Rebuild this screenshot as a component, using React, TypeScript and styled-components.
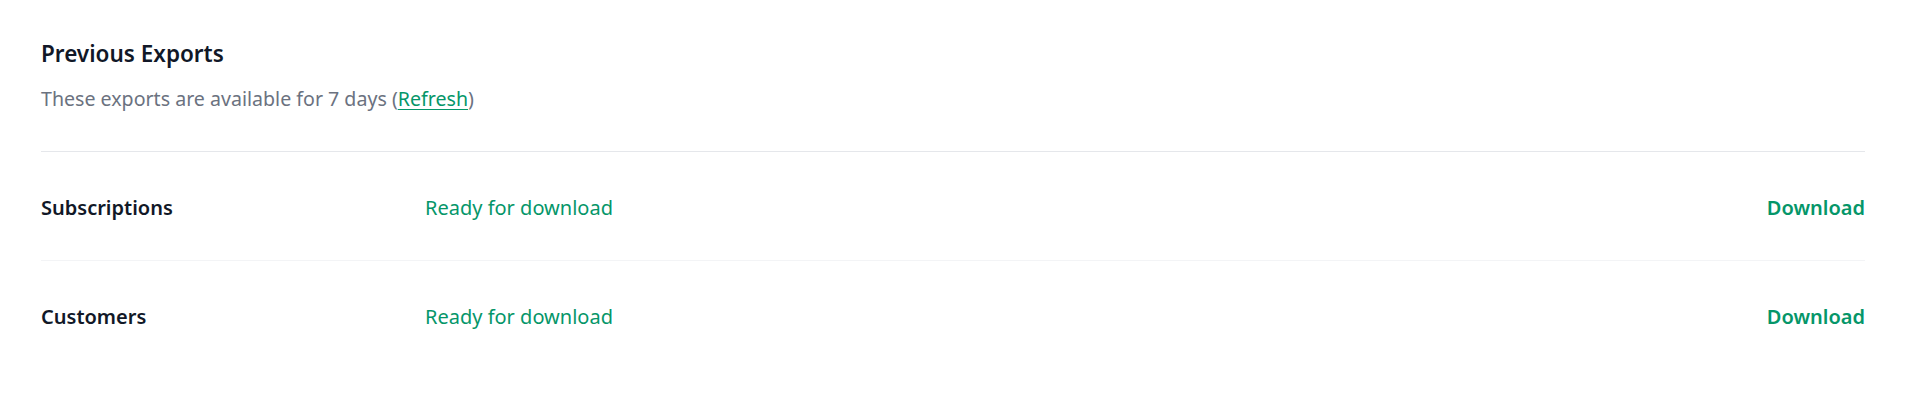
import React from "react";
import styled, { createGlobalStyle } from "styled-components";

const Global = createGlobalStyle`
  html, body { margin: 0; padding: 0; background: #ffffff; }
  body { font-family: "Noto Sans", "Open Sans", Arial, sans-serif; -webkit-font-smoothing: antialiased; }
`;

const Page = styled.div`
  padding: 40px 61px 0 41px;
`;

const Header = styled.header`
  display: flex;
  flex-direction: column;
  gap: 17px;
  padding-bottom: 38px;
  border-bottom: 1px solid #e5e7eb;
`;

const Title = styled.h2`
  margin: 0;
  font-size: 22.5px;
  line-height: 28px;
  font-weight: 600;
  color: #111827;
`;

const Subtitle = styled.p`
  margin: 0;
  font-size: 19.6px;
  line-height: 28px;
  color: #6b7280;
`;

const Link = styled.a`
  color: #059669;
  text-decoration: underline;
  text-underline-offset: 3px;
  cursor: pointer;
`;

const List = styled.ul`
  list-style: none;
  margin: 0;
  padding: 0;
`;

const Row = styled.li`
  display: grid;
  grid-template-columns: 384px 1fr auto;
  align-items: center;
  padding: 42px 0 38px;
  border-bottom: 1px solid #f3f4f6;
  &:last-child { border-bottom: none; }
`;

const Name = styled.span`
  font-size: 20px;
  line-height: 28px;
  font-weight: 600;
  color: #111827;
`;

const Status = styled.span`
  font-size: 20px;
  line-height: 28px;
  color: #059669;
`;

const Action = styled.a`
  font-size: 20px;
  line-height: 28px;
  font-weight: 600;
  color: #059669;
  cursor: pointer;
`;

const exportsList = [
  { name: "Subscriptions", status: "Ready for download" },
  { name: "Customers", status: "Ready for download" },
];

export default function App() {
  return (
    <>
      <Global />
      <Page>
        <Header>
          <Title>Previous Exports</Title>
          <Subtitle>
            These exports are available for 7 days (<Link>Refresh</Link>)
          </Subtitle>
        </Header>
        <List>
          {exportsList.map((e) => (
            <Row key={e.name}>
              <Name>{e.name}</Name>
              <Status>{e.status}</Status>
              <Action>Download</Action>
            </Row>
          ))}
        </List>
      </Page>
    </>
  );
}
